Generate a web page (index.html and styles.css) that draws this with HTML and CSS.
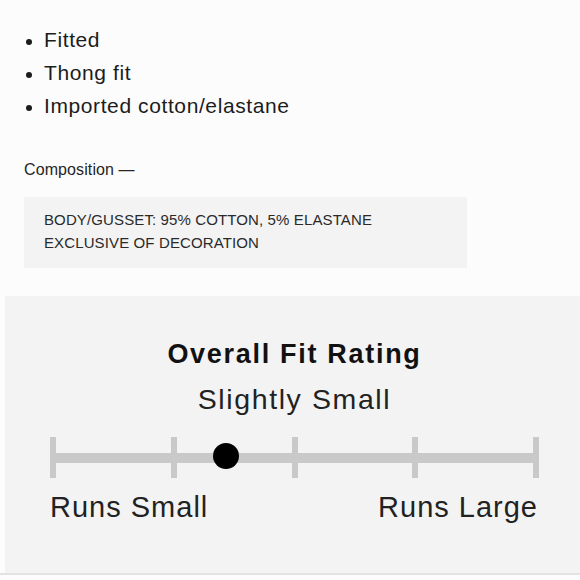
FILE: index.html
```html
<!DOCTYPE html>
<html lang="en">
<head>
<meta charset="utf-8">
<title>Product details</title>
<link rel="stylesheet" href="styles.css">
</head>
<body>
<section class="details">
  <ul class="features">
    <li>Fitted</li>
    <li>Thong fit</li>
    <li>Imported cotton/elastane</li>
  </ul>
  <h3 class="comp-title">Composition —</h3>
  <div class="comp-box">
    <p>BODY/GUSSET: 95% COTTON, 5% ELASTANE</p>
    <p>EXCLUSIVE OF DECORATION</p>
  </div>
</section>
<section class="fit">
  <h2 class="fit-title">Overall Fit Rating</h2>
  <p class="fit-value">Slightly Small</p>
  <div class="scale">
    <span class="tick"></span>
    <span class="tick"></span>
    <span class="tick"></span>
    <span class="tick"></span>
    <span class="tick"></span>
    <span class="dot" style="left: 36%"></span>
  </div>
  <div class="scale-labels">
    <span>Runs Small</span>
    <span>Runs Large</span>
  </div>
</section>
<div class="rule"></div>
</body>
</html>
```

FILE: styles.css
```css
html, body {
  margin: 0;
  padding: 0;
  background: #fcfcfc;
  color: #1c1c1c;
  font-family: "Liberation Sans", Arial, sans-serif;
}

.details {
  padding: 23px 0 0 24px;
}

.features {
  list-style: none;
  margin: 0;
  padding: 0;
}

.features li {
  position: relative;
  padding-left: 20px;
  font-size: 21px;
  line-height: 33px;
  letter-spacing: 0.6px;
}

.features li::before {
  content: "";
  position: absolute;
  left: 2px;
  top: 16px;
  width: 6px;
  height: 6px;
  border-radius: 50%;
  background: #1c1c1c;
}

.comp-title {
  margin: 38px 0 0;
  font-size: 16px;
  font-weight: normal;
  line-height: 20px;
  letter-spacing: 0.1px;
  color: #262626;
}

.comp-box {
  margin-top: 17px;
  width: 443px;
  box-sizing: border-box;
  padding: 12px 20px 14px;
  background: #f3f3f3;
}

.comp-box p {
  margin: 0;
  font-size: 15px;
  line-height: 22.5px;
  letter-spacing: 0.12px;
  color: #2a2a2a;
}

.fit {
  margin: 28px 0 0 5px;
  padding: 41px 41px 49px 45px;
  background: #f3f3f3;
  display: flex;
  flex-direction: column;
}

.fit-title {
  margin: 0;
  text-align: center;
  font-size: 27px;
  font-weight: bold;
  line-height: 34px;
  letter-spacing: 1.7px;
  color: #111;
}

.fit-value {
  margin: 11px 0 0;
  text-align: center;
  font-size: 28.5px;
  line-height: 34px;
  letter-spacing: 1.6px;
  color: #222;
}

.scale {
  position: relative;
  margin-top: 21px;
  height: 41px;
  display: flex;
  justify-content: space-between;
  background: linear-gradient(#c9c9c9, #c9c9c9) center / 100% 10px no-repeat;
}

.tick {
  width: 6px;
  height: 100%;
  background: #c9c9c9;
}

.dot {
  position: absolute;
  top: 6px;
  width: 26px;
  height: 26px;
  margin-left: -13px;
  border-radius: 50%;
  background: #000;
}

.scale-labels {
  margin-top: 12px;
  display: flex;
  justify-content: space-between;
  padding-right: 1px;
  font-size: 29px;
  line-height: 34px;
  letter-spacing: 1px;
  color: #222;
}

.rule {
  height: 2px;
  background: #e3e3e3;
}
```
